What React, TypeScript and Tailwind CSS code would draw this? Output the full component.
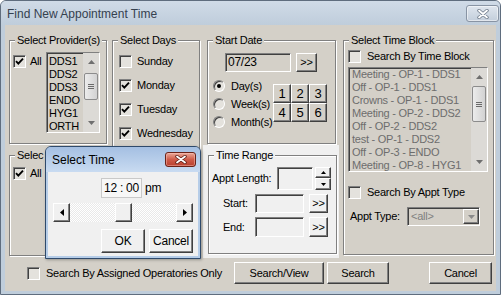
import React from "react";

const raised =
  "border border-t-white border-l-white border-b-[#404040] border-r-[#404040] shadow-[inset_-1px_-1px_0_#808080]";
const sunken =
  "border border-t-[#808080] border-l-[#808080] border-b-white border-r-white shadow-[inset_1px_1px_0_#404040]";

function Tri({ dir, color = "#000" }: { dir: "up" | "down" | "left" | "right"; color?: string }) {
  if (dir === "up")
    return (
      <svg width="7" height="4" viewBox="0 0 7 4" className="block">
        <path d="M0 4 L3.5 0 L7 4 Z" fill={color} />
      </svg>
    );
  if (dir === "down")
    return (
      <svg width="7" height="4" viewBox="0 0 7 4" className="block">
        <path d="M0 0 L7 0 L3.5 4 Z" fill={color} />
      </svg>
    );
  if (dir === "left")
    return (
      <svg width="4" height="7" viewBox="0 0 4 7" className="block">
        <path d="M4 0 L4 7 L0 3.5 Z" fill={color} />
      </svg>
    );
  return (
    <svg width="4" height="7" viewBox="0 0 4 7" className="block">
      <path d="M0 0 L4 3.5 L0 7 Z" fill={color} />
    </svg>
  );
}

function CheckMark() {
  return (
    <svg width="11" height="11" viewBox="0 0 11 11" className="block">
      <path d="M2 5.2 L4.3 7.6 L9 2.6" stroke="#000" strokeWidth="1.9" fill="none" />
    </svg>
  );
}

function Check({ checked = false, label, gap = "ml-[5px]" }: { checked?: boolean; label?: string; gap?: string }) {
  return (
    <div className="flex items-center h-[13px] whitespace-nowrap">
      <div className={`w-[13px] h-[13px] shrink-0 ${sunken} bg-[#e4e2dd]`}>{checked && <CheckMark />}</div>
      {label && <span className={`${gap} leading-[13px]`}>{label}</span>}
    </div>
  );
}

function Radio({ checked = false, label }: { checked?: boolean; label: string }) {
  return (
    <div className="flex items-center h-[18px] whitespace-nowrap">
      <div className="w-[12px] h-[12px] shrink-0 rounded-full border border-t-[#808080] border-l-[#808080] border-b-white border-r-white bg-[#e4e2dd] shadow-[inset_1px_1px_0_#404040] flex items-center justify-center">
        {checked && <div className="w-[4px] h-[4px] rounded-full bg-black" />}
      </div>
      <span className="ml-[6px] leading-[13px]">{label}</span>
    </div>
  );
}

function Group({
  label,
  className = "",
  labelBg = "bg-[#d4d0c8]",
  children,
}: {
  label: string;
  className?: string;
  labelBg?: string;
  children?: React.ReactNode;
}) {
  return (
    <div className={`relative shrink-0 border border-[#808080] shadow-[inset_1px_1px_0_#fff,1px_1px_0_#fff] ${className}`}>
      <span className={`absolute top-[-8px] left-[5px] px-[2px] leading-[14px] whitespace-nowrap ${labelBg}`}>{label}</span>
      {children}
    </div>
  );
}

function Btn({ className = "", bg = "bg-[#d4d0c8]", children }: { className?: string; bg?: string; children?: React.ReactNode }) {
  return (
    <div className={`shrink-0 flex items-center justify-center leading-none ${raised} ${bg} ${className}`}>{children}</div>
  );
}

function Grip() {
  return (
    <div className="flex flex-col gap-[1px]">
      <div className="w-[6px] h-[1px] bg-[#6a6a6a]" />
      <div className="w-[6px] h-[1px] bg-[#6a6a6a]" />
      <div className="w-[6px] h-[1px] bg-[#6a6a6a]" />
    </div>
  );
}

function ListScroll({ thumb }: { thumb: string }) {
  return (
    <div className="w-[16px] h-full shrink-0 flex flex-col bg-[#dcdad6]">
      <div className="h-[18px] shrink-0 flex items-center justify-center">
        <Tri dir="up" color="#6f6f6f" />
      </div>
      <div className="flex-1 flex flex-col">
        <div
          className={`mx-[1px] rounded-[2px] border border-[#8c8c8c] bg-gradient-to-r from-[#ececec] to-[#d2d2d2] flex items-center justify-center ${thumb}`}
        >
          <Grip />
        </div>
      </div>
      <div className="h-[18px] shrink-0 flex items-center justify-center">
        <Tri dir="down" color="#6f6f6f" />
      </div>
    </div>
  );
}

function MainClose() {
  return (
    <div className="ml-auto mr-[1px] mt-[4px] w-[33px] h-[17px] rounded-[3px] border border-[#8894a4] bg-gradient-to-b from-[#dfe6ee] to-[#c3cedb] shadow-[inset_0_0_0_1px_rgba(255,255,255,0.5)] flex items-center justify-center">
      <svg width="12" height="10" viewBox="0 0 12 10">
        <path d="M2 1.5 L10 8.5 M10 1.5 L2 8.5" stroke="#6f7b8a" strokeWidth="3.4" strokeLinecap="round" />
        <path d="M2 1.5 L10 8.5 M10 1.5 L2 8.5" stroke="#ffffff" strokeWidth="1.8" strokeLinecap="round" />
      </svg>
    </div>
  );
}

function RedClose() {
  return (
    <div className="ml-auto mr-[4px] mt-[5px] w-[31px] h-[15px] rounded-[3px] border border-[#6b2217] bg-gradient-to-b from-[#e9a899] via-[#cf5b49] to-[#b9402f] shadow-[inset_0_0_0_1px_rgba(255,200,190,0.45)] flex items-center justify-center">
      <svg width="12" height="9" viewBox="0 0 12 9">
        <path d="M2 1.5 L10 7.5 M10 1.5 L2 7.5" stroke="#5b1a12" strokeWidth="3.4" strokeLinecap="round" />
        <path d="M2 1.5 L10 7.5 M10 1.5 L2 7.5" stroke="#ffffff" strokeWidth="1.8" strokeLinecap="round" />
      </svg>
    </div>
  );
}

const timeBlocks = [
  "Meeting - OP-1 - DDS1",
  "Off - OP-1 - DDS1",
  "Crowns - OP-1 - DDS1",
  "Meeting - OP-2 - DDS2",
  "Off - OP-2 - DDS2",
  "test - OP-1 - DDS2",
  "Off - OP-3 - ENDO",
  "Meeting - OP-8 - HYG1",
];

function Popup() {
  return (
    <div className="absolute left-[45px] top-[146px] w-[156px] h-[113px] flex flex-col border border-[#2f4a6b] rounded-t-[6px] bg-[#b6cde8] shadow-[1px_1px_3px_rgba(0,0,0,0.3)]">
      <div className="h-[25px] shrink-0 flex items-start rounded-t-[5px] bg-gradient-to-b from-[#a4bfe2] to-[#c9dbf1]">
        <span className="ml-[6px] mt-[5px] text-[12px] leading-[16px] tracking-normal text-black whitespace-nowrap">
          Select Time
        </span>
        <RedClose />
      </div>
      <div className="flex-1 mx-[2px] mb-[2px] bg-[#f0f0f0] flex flex-col">
        <div className="flex items-center pt-[6px] pl-[53px]">
          <div className="w-[41px] h-[20px] border border-[#c9c9c9] bg-[#f7f7f7] flex items-center justify-center text-[12px] whitespace-nowrap">
            12 : 00
          </div>
          <span className="ml-[3px] text-[12px]">pm</span>
        </div>
        <div className="mt-[5px] ml-[5px] w-[140px] h-[19px] flex">
          <Btn bg="bg-[#f0f0f0]" className="w-[17px] h-[19px]">
            <Tri dir="left" />
          </Btn>
          <div className="flex-1 flex bg-[repeating-conic-gradient(#ffffff_0_25%,#e9e9e9_0_50%)] bg-[length:2px_2px]">
            <Btn bg="bg-[#f0f0f0]" className="ml-[45px] w-[17px] h-[19px]" />
          </div>
          <Btn bg="bg-[#f0f0f0]" className="w-[17px] h-[19px]">
            <Tri dir="right" />
          </Btn>
        </div>
        <div className="flex mt-[7px] pl-[53px] text-[12px]">
          <Btn bg="bg-[#f0f0f0]" className="w-[44px] h-[24px]">
            OK
          </Btn>
          <Btn bg="bg-[#f0f0f0]" className="ml-[4px] w-[44px] h-[24px]">
            Cancel
          </Btn>
        </div>
      </div>
    </div>
  );
}

export default function App() {
  return (
    <div className="relative w-[501px] h-[295px] overflow-hidden font-['Liberation_Sans',Arial,sans-serif] text-[11px] tracking-[-0.25px] text-black">
      <div className="w-full h-full flex flex-col border border-[#5f6d7e] rounded-t-[6px] bg-[#bfcddb]">
        {/* title bar */}
        <div className="h-[24px] shrink-0 flex items-start rounded-t-[5px] bg-gradient-to-b from-[#d0dbe7] to-[#bfcddb]">
          <span className="ml-[6px] mt-[5px] text-[12px] leading-[16px] tracking-normal text-[#35414f] whitespace-nowrap">
            Find New Appointment Time
          </span>
          <MainClose />
        </div>

        {/* client */}
        <div className="flex-1 mx-[4px] mb-[3px] bg-[#d4d0c8] flex flex-col">
          <div className="flex pt-[15px] pl-[4px]">
            {/* column 1 */}
            <div className="w-[98px] shrink-0 flex flex-col">
              <Group label="Select Provider(s)" className="w-[98px] h-[104px]">
                <div className="flex pt-[11px] pl-[3px]">
                  <div className="w-[33px] pt-[3px]">
                    <Check checked label="All" gap="ml-[4px]" />
                  </div>
                  <div className={`w-[54px] h-[81px] flex ${sunken} bg-[#d4d0c8] overflow-hidden`}>
                    <div className="flex-1 pl-[2px] pt-[2px] leading-[13px]">
                      <div>DDS1</div>
                      <div>DDS2</div>
                      <div>DDS3</div>
                      <div>ENDO</div>
                      <div>HYG1</div>
                      <div>ORTH</div>
                    </div>
                    <ListScroll thumb="mt-[2px] h-[27px]" />
                  </div>
                </div>
              </Group>
              <Group label="Selec" className="mt-[11px] w-[98px] h-[101px]">
                <div className="flex pt-[8px] pl-[3px]">
                  <div className="w-[33px] pt-[3px]">
                    <Check checked label="All" gap="ml-[4px]" />
                  </div>
                  <div className={`w-[54px] h-[81px] flex ${sunken} bg-[#d4d0c8] overflow-hidden`}>
                    <div className="flex-1" />
                    <ListScroll thumb="mt-[2px] h-[27px]" />
                  </div>
                </div>
              </Group>
            </div>

            {/* column 2 */}
            <Group label="Select Days" className="ml-[5px] w-[88px] h-[216px]">
              <div className="flex flex-col gap-[11px] pt-[14px] pl-[6px]">
                <Check label="Sunday" />
                <Check checked label="Monday" />
                <Check checked label="Tuesday" />
                <Check checked label="Wednesday" />
              </div>
            </Group>

            {/* column 3 */}
            <div className="ml-[3px] w-[136px] shrink-0 flex flex-col">
              <Group label="Start Date" className="ml-[4px] w-[129px] h-[104px]">
                <div className="flex pt-[12px] pl-[17px]">
                  <div className={`w-[66px] h-[19px] ${sunken} bg-[#d4d0c8] text-[12px] leading-[16px] pl-[2px]`}>07/23</div>
                  <Btn className="ml-[5px] w-[21px] h-[19px]">&gt;&gt;</Btn>
                </div>
                <div className="flex mt-[5px] pl-[5px]">
                  <div className="w-[60px] shrink-0 flex flex-col">
                    <Radio checked label="Day(s)" />
                    <Radio label="Week(s)" />
                    <Radio label="Month(s)" />
                  </div>
                  <div className="relative mt-[7px] grid grid-cols-[18px_18px_18px] grid-rows-[19px_19px] text-[13px]">
                    <Btn>1</Btn>
                    <Btn>2</Btn>
                    <Btn>3</Btn>
                    <Btn>4</Btn>
                    <Btn>5</Btn>
                    <Btn>6</Btn>
                  </div>
                </div>
              </Group>
              <div className="mt-[1px] h-[113px] bg-[#f0f0f0] flex flex-col">
                <Group label="Time Range" labelBg="bg-[#f0f0f0]" className="ml-[5px] mt-[10px] w-[129px] h-[99px]">
                  <div className="flex items-center mt-[11px] pl-[3px]">
                    <span className="w-[65px] whitespace-nowrap">Appt Length:</span>
                    <div className={`w-[36px] h-[23px] ${sunken} bg-[#f0f0f0]`} />
                    <div className="ml-[2px] flex flex-col">
                      <Btn bg="bg-[#f0f0f0]" className="w-[16px] h-[11px]">
                        <svg width="5" height="3" viewBox="0 0 5 3" className="block">
                          <path d="M0 3 L2.5 0 L5 3 Z" fill="#000" />
                        </svg>
                      </Btn>
                      <Btn bg="bg-[#f0f0f0]" className="w-[16px] h-[12px]">
                        <svg width="5" height="3" viewBox="0 0 5 3" className="block">
                          <path d="M0 0 L5 0 L2.5 3 Z" fill="#000" />
                        </svg>
                      </Btn>
                    </div>
                  </div>
                  <div className="flex items-center mt-[4px] pl-[14px]">
                    <span className="w-[32px]">Start:</span>
                    <div className={`w-[49px] h-[19px] ${sunken} bg-[#f0f0f0]`} />
                    <Btn bg="bg-[#f0f0f0]" className="ml-[5px] w-[19px] h-[19px]">
                      &gt;&gt;
                    </Btn>
                  </div>
                  <div className="flex items-center mt-[4px] pl-[14px]">
                    <span className="w-[32px]">End:</span>
                    <div className={`w-[49px] h-[20px] ${sunken} bg-[#f0f0f0]`} />
                    <Btn bg="bg-[#f0f0f0]" className="ml-[5px] w-[19px] h-[20px]">
                      &gt;&gt;
                    </Btn>
                  </div>
                </Group>
              </div>
            </div>

            {/* column 4 */}
            <Group label="Select Time Block" className="ml-[4px] w-[151px] h-[215px]">
              <div className="pt-[9px] pl-[4px]">
                <Check label="Search By Time Block" gap="ml-[6px]" />
              </div>
              <div className={`mt-[4px] ml-[4px] w-[140px] h-[105px] flex ${sunken} bg-[#d4d0c8] overflow-hidden`}>
                <div className="flex-1 pl-[3px] leading-[13px] text-[#6d6d6d] whitespace-nowrap overflow-hidden">
                  {timeBlocks.map((t, i) => (
                    <div key={i}>{t}</div>
                  ))}
                </div>
                <ListScroll thumb="h-[36px]" />
              </div>
              <div className="mt-[14px] pl-[4px]">
                <Check label="Search By Appt Type" gap="ml-[6px]" />
              </div>
              <div className="flex items-center mt-[8px] pl-[6px]">
                <span className="w-[57px] whitespace-nowrap">Appt Type:</span>
                <div className={`w-[73px] h-[19px] flex ${sunken} bg-[#d4d0c8] pt-[1px] pl-[1px]`}>
                  <span className="flex-1 pl-[2px] leading-[15px] text-[#808080]">&lt;all&gt;</span>
                  <Btn className="w-[16px] h-[15px]">
                    <Tri dir="down" color="#8a8a8a" />
                  </Btn>
                </div>
              </div>
            </Group>
          </div>

          {/* bottom row */}
          <div className="flex items-center mt-[4px] h-[22px] pl-[22px]">
            <div className="w-[207px] shrink-0">
              <Check label="Search By Assigned Operatories Only" gap="ml-[6px]" />
            </div>
            <Btn className="w-[90px] h-[22px]">Search/View</Btn>
            <Btn className="ml-[3px] w-[62px] h-[22px]">Search</Btn>
            <Btn className="ml-[40px] w-[63px] h-[22px]">Cancel</Btn>
          </div>
        </div>
      </div>
      <Popup />
    </div>
  );
}
